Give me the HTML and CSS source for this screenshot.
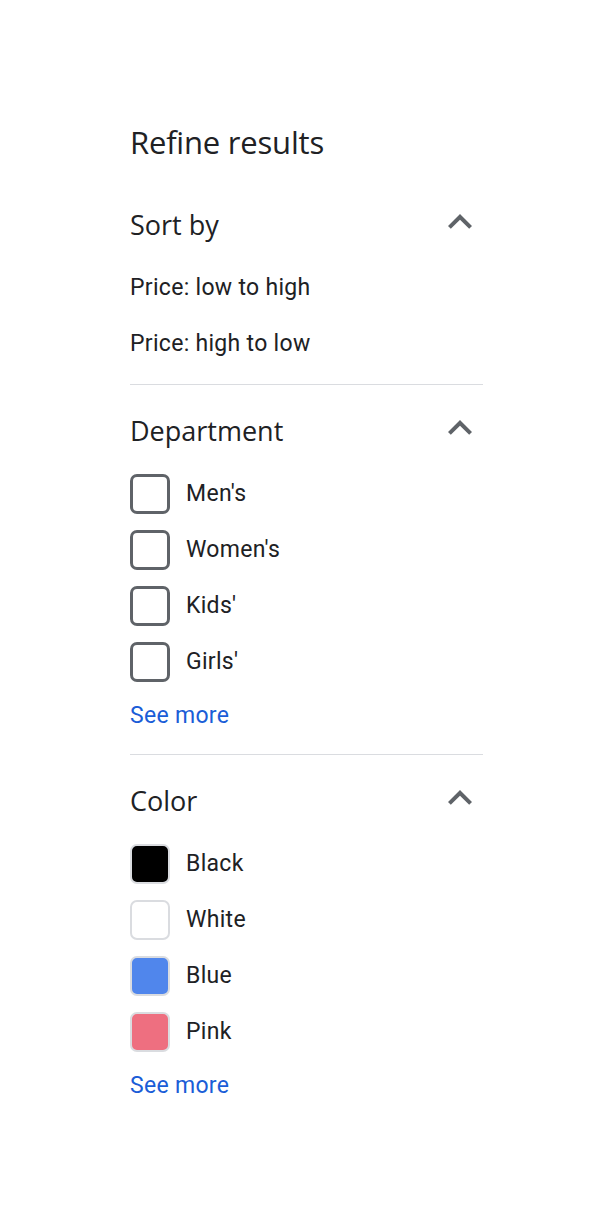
FILE: index.html
```html
<!DOCTYPE html>
<html lang="en">
<head>
<meta charset="utf-8">
<title>Refine results</title>
<link rel="stylesheet" href="styles.css">
</head>
<body>
<main class="panel">
  <h1 class="title">Refine results</h1>

  <section class="group">
    <div class="group-head">
      <h2 class="group-title">Sort by</h2>
      <svg class="chevron" width="48" height="48" viewBox="0 0 24 24" aria-hidden="true"><path d="M12 8l-6 6 1.41 1.41L12 10.83l4.59 4.58L18 14z"/></svg>
    </div>
    <ul class="options">
      <li class="option">Price: low to high</li>
      <li class="option">Price: high to low</li>
    </ul>
  </section>

  <section class="group">
    <div class="group-head">
      <h2 class="group-title">Department</h2>
      <svg class="chevron" width="48" height="48" viewBox="0 0 24 24" aria-hidden="true"><path d="M12 8l-6 6 1.41 1.41L12 10.83l4.59 4.58L18 14z"/></svg>
    </div>
    <ul class="options">
      <li class="option"><span class="box"></span><span class="label">Men's</span></li>
      <li class="option"><span class="box"></span><span class="label">Women's</span></li>
      <li class="option"><span class="box"></span><span class="label">Kids'</span></li>
      <li class="option"><span class="box"></span><span class="label">Girls'</span></li>
    </ul>
    <a class="see-more" href="#">See more</a>
  </section>

  <section class="group last">
    <div class="group-head">
      <h2 class="group-title">Color</h2>
      <svg class="chevron" width="48" height="48" viewBox="0 0 24 24" aria-hidden="true"><path d="M12 8l-6 6 1.41 1.41L12 10.83l4.59 4.58L18 14z"/></svg>
    </div>
    <ul class="options">
      <li class="option"><span class="swatch swatch-black"></span><span class="label">Black</span></li>
      <li class="option"><span class="swatch swatch-white"></span><span class="label">White</span></li>
      <li class="option"><span class="swatch swatch-blue"></span><span class="label">Blue</span></li>
      <li class="option"><span class="swatch swatch-pink"></span><span class="label">Pink</span></li>
    </ul>
    <a class="see-more" href="#">See more</a>
  </section>
</main>
</body>
</html>
```

FILE: styles.css
```css
* {
  box-sizing: border-box;
}

html, body {
  margin: 0;
  padding: 0;
  background: #ffffff;
}

body {
  font-family: Roboto, "Liberation Sans", sans-serif;
  color: #202124;
}

.panel {
  width: 353px;
  margin-left: 130px;
  padding-top: 124px;
}

.title {
  margin: 0 0 41px;
  font-family: "Open Sans", Roboto, sans-serif;
  font-weight: 400;
  font-size: 31px;
  line-height: 36px;
  letter-spacing: -0.2px;
  color: #202124;
}

.group {
  border-bottom: 1px solid #dadce0;
  padding-bottom: 12px;
}

.group + .group {
  padding-top: 22px;
}

.group.last {
  border-bottom: none;
}

.group-head {
  display: flex;
  align-items: center;
  justify-content: space-between;
  height: 48px;
  margin-bottom: 11px;
}

.group-title {
  margin: 0;
  font-family: "Open Sans", Roboto, sans-serif;
  font-weight: 400;
  font-size: 27px;
  line-height: 32px;
  color: #202124;
}

.chevron {
  fill: #5f6368;
  margin-right: -1px;
  margin-bottom: 7px;
}

.options {
  list-style: none;
  margin: 0;
  padding: 0;
}

.option {
  display: flex;
  align-items: center;
  height: 56px;
  font-size: 23px;
  line-height: 26px;
  letter-spacing: 0.3px;
  color: #202124;
}

.box {
  width: 40px;
  height: 40px;
  border: 3px solid #5f6368;
  border-radius: 7px;
  flex: none;
}

.swatch {
  width: 40px;
  height: 40px;
  border: 2px solid #dadce0;
  border-radius: 7px;
  flex: none;
}

.swatch-black { background: #000000; }
.swatch-white { background: #ffffff; }
.swatch-blue { background: #5086ec; }
.swatch-pink { background: #ee6f80; }

.label {
  margin-left: 16px;
}

.see-more {
  display: block;
  margin: 14px 0;
  font-size: 23px;
  line-height: 24px;
  letter-spacing: 0.3px;
  color: #1a5dd7;
  text-decoration: none;
  width: max-content;
}
```
